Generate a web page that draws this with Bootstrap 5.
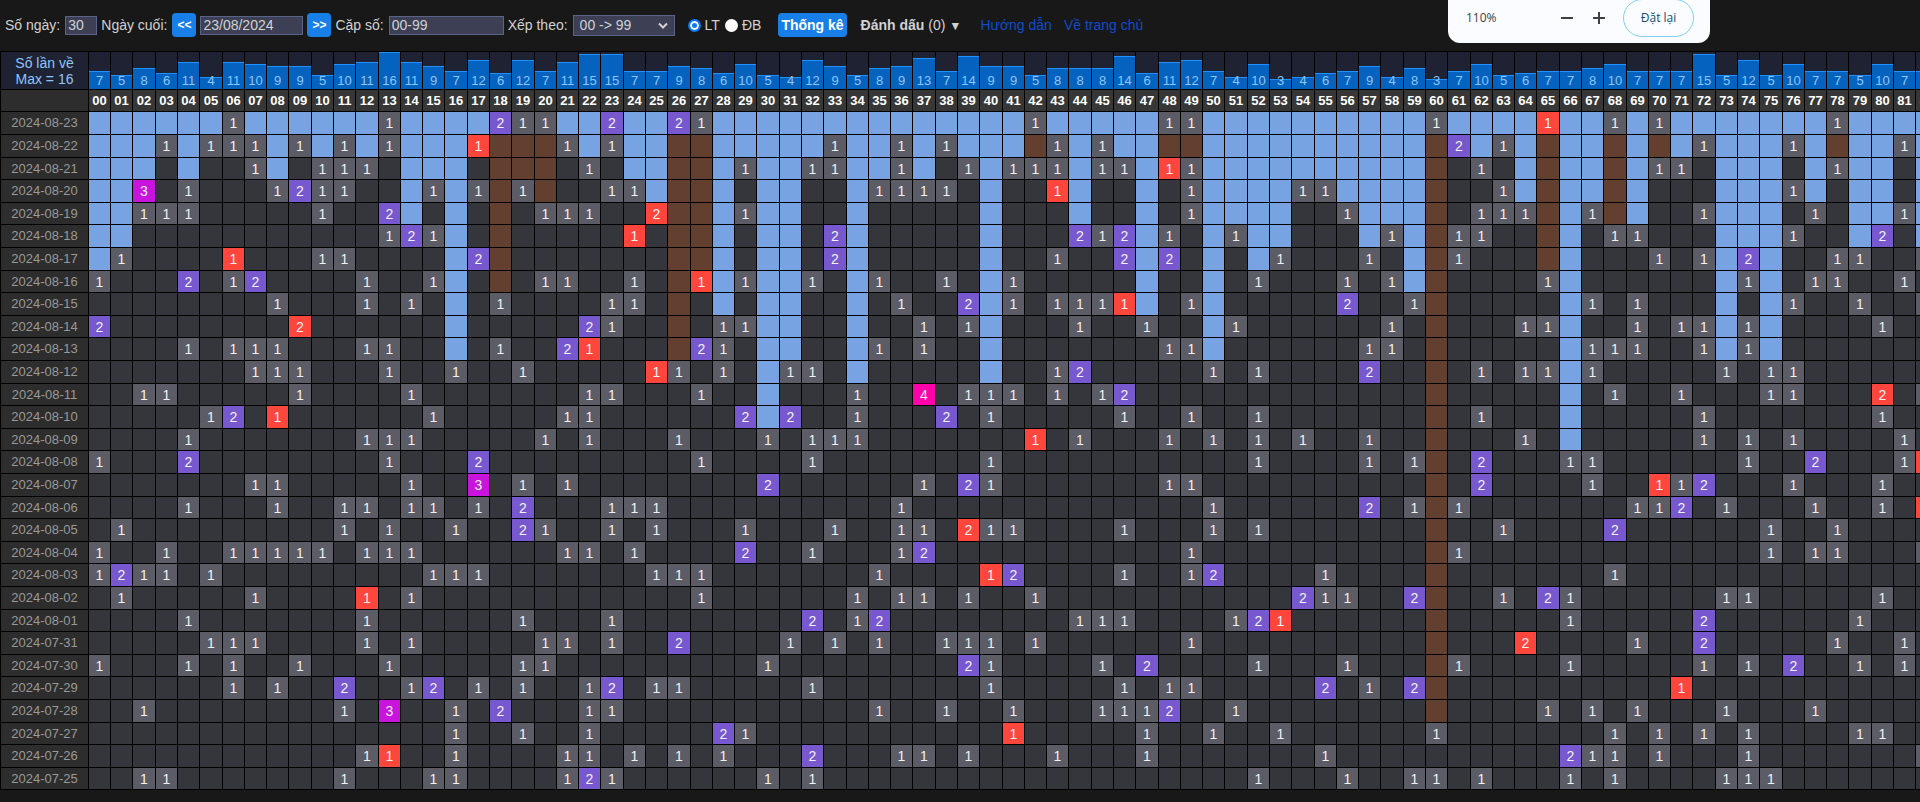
<!DOCTYPE html>
<html lang="vi" data-bs-theme="dark">
<head>
<meta charset="utf-8">
<meta name="viewport" content="width=device-width, initial-scale=1">
<title>Thống kê lô tô</title>
<link rel="stylesheet" href="https://cdn.jsdelivr.net/npm/bootstrap@5.3.0/dist/css/bootstrap.min.css">
<style>
  body { background: #181818; color: #d2d2d2; font-family: "Liberation Sans", Arial, sans-serif; font-size: 14px; line-height: 16px; }
  .toolbar { min-height: 51px; padding: 0 5px 1px; gap: 4px; white-space: nowrap; }
  .toolbar label { margin-right: 1px; }
  .toolbar .field { background: #3d3f54; border: 1px solid #5a6488; border-radius: 0; color: #d2d2d2; font-size: 14px; line-height: 16px; height: 19px; padding: 0 2px; }
  .toolbar .field-days { width: 32px; }
  .toolbar .field-date { width: 103px; }
  .toolbar .field-pairs { width: 115px; }
  .toolbar .field-sort { width: 102px; height: 21px; padding: 0 6px; appearance: none; }
  .sort-box { position: relative; }
  .sort-box svg { position: absolute; right: 7px; top: 7px; pointer-events: none; }
  .kinds { margin: 0 12px 0 9px; }
  .toolbar .act { background: #187fe9; border: 0; border-radius: 4px; color: #fff; font-size: 14px; font-weight: 700; line-height: 16px; height: 24px; padding: 0 3px; }
  .toolbar .act-step { width: 24px; padding: 0; font-size: 12px; }
  .toolbar .pick { appearance: none; width: 13px; height: 13px; border-radius: 50%; background: #fff; margin: 0; }
  .toolbar .pick:checked { border: 2px solid #0a78f5; box-shadow: inset 0 0 0 2px #fff; background: #0a78f5; }
  .toolbar .mark-menu { background: none; border: 0; color: #d2d2d2; padding: 0; margin: 0 15px 0 10px; line-height: 16px; }
  .toolbar a { color: #0f4bcc; text-decoration: none; }

  .zoom-bubble { position: absolute; top: 0; right: 210px; width: 262px; height: 43px; padding: 0 16px 8px 18px; background: #fbfcff; color: #3c4043; border-radius: 0 0 12px 12px; font: 12px/16px "Open Sans", sans-serif; z-index: 2; }
  .zoom-bubble button { background: none; border: 0; padding: 0; color: #3c4043; }
  .zoom-bubble .reset { width: 71px; height: 38px; border: 1px solid #7fd0f7; border-radius: 19px; color: #0a5273; font-weight: 500; }

  .grid-stat { table-layout: fixed; width: 1px; border-collapse: separate; border-spacing: 0; border: 0 solid #000; border-width: 1px 0 0 1px; font-size: 13px; color: #f2f2f2; cursor: default; }
  .grid-stat col { width: 22px; }
  .grid-stat col:nth-child(7n+4), .grid-stat col:nth-child(7n) { width: 23px; }
  .grid-stat col.dates { width: 88px; }
  .grid-stat th, .grid-stat td { padding: 0; border: 0 solid #000; border-width: 0 1px 1px 0; white-space: nowrap; font-weight: 400; }
  .grid-stat td { background: #35363b; font-size: 14px; }
  .grid-stat tbody tr { height: 23px; }
  .grid-stat tbody tr:nth-child(5n+3), .grid-stat tbody tr:nth-child(5n) { height: 22px; }
  .grid-stat tbody th { background: #2d2d2d; color: #999; }
  .grid-stat .totals { height: 38px; }
  .grid-stat .totals th { background: #1e2232; color: #8ec5fb; vertical-align: bottom; }
  .grid-stat .totals th:first-child { font-size: 14px; vertical-align: middle; }
  .grid-stat .totals .bar { background: #0563bf; border-top: 1px solid #1e90ff; display: flex; align-items: end; justify-content: center; }
  .grid-stat .pairs { height: 22px; }
  .grid-stat .pairs th { background: #373737; color: #fff; font-weight: 700; }
  .grid-stat .pairs th:first-child { background: #2d2d2d; }
  .grid-stat td.wait { background: #78a3e3; }
  .grid-stat td.rest { background: #623f2f; }
  .grid-stat td.hit1 { background: #5c5c66; }
  .grid-stat td.hit2 { background: #7758cf; }
  .grid-stat td.hit3 { background: #c814dc; }
  .grid-stat td.hit4 { background: #ff00aa; }
  .grid-stat td.special { background: #ff463c; }
</style>
</head>
<body>
<div class="position-relative overflow-hidden">
  <form class="toolbar d-flex align-items-center mb-0" onsubmit="return false">
    <label for="days">Số ngày:</label>
    <input class="field field-days" id="days" type="text" value="30">
    <label for="lastDay">Ngày cuối:</label>
    <button class="act act-step" type="button">&lt;&lt;</button>
    <input class="field field-date" id="lastDay" type="text" value="23/08/2024">
    <button class="act act-step" type="button">&gt;&gt;</button>
    <label for="pairs">Cặp số:</label>
    <input class="field field-pairs" id="pairs" type="text" value="00-99">
    <label for="sort">Xếp theo:</label>
    <div class="sort-box d-flex">
      <select class="field field-sort" id="sort"><option>00 -&gt; 99</option></select>
      <svg width="10" height="8" viewBox="0 0 10 8" fill="none" stroke="#d2d2d2" stroke-width="2"><path d="M1 1.5 5 5.5 9 1.5"/></svg>
    </div>
    <div class="kinds d-flex align-items-center gap-1">
      <input class="pick" type="radio" name="kind" id="lt" checked><label for="lt">LT</label>
      <input class="pick" type="radio" name="kind" id="db"><label for="db">ĐB</label>
    </div>
    <button class="act" type="submit">Thống kê</button>
    <button class="mark-menu" type="button"><b>Đánh dấu</b> (0) <small>▼</small></button>
    <a class="me-2" href="#help">Hướng dẫn</a>
    <a href="#home">Về trang chủ</a>
  </form>

  <div class="zoom-bubble d-flex align-items-center">
    <span class="me-auto">110%</span>
    <button class="d-flex me-3" type="button" aria-label="Thu nhỏ"><svg width="16" height="16" viewBox="0 0 16 16" stroke="#3c4043" stroke-width="2"><path d="M2 8h12"/></svg></button>
    <button class="d-flex me-3" type="button" aria-label="Phóng to"><svg width="16" height="16" viewBox="0 0 16 16" stroke="#3c4043" stroke-width="2"><path d="M2 8h12M8 2v12"/></svg></button>
    <button class="reset" type="button">Đặt lại</button>
  </div>

  <table class="grid-stat text-center align-middle" id="stat"></table>
</div>

<script src="https://cdn.jsdelivr.net/npm/bootstrap@5.3.0/dist/js/bootstrap.bundle.min.js"></script>
<script>
  // One line per day: pair, "xN" when it came up N times, "!" when it was the special prize.
  const draws = `
2024-08-23 6 13 18x2 19 20 23x2 26x2 27 42 48 49 60 65! 68 70 78
2024-08-22 3 5 6 7 9 11 13 17! 21 23 33 36 38 43 45 61x2 63 72 76 81
2024-08-21 7 10 11 12 22 29 32 33 36 39 41 42 43 45 46 48! 49 62 70 71 78
2024-08-20 2x3 4 8 9x2 10 11 15 17 19 23 24 35 36 37 38 43! 49 54 55 63 76
2024-08-19 2 3 4 10 13x2 20 21 22 25x2! 29 49 56 62 63 64 67 72 77 81
2024-08-18 13 14x2 15 24! 33x2 44x2 45 46x2 48 51 58 61 62 68 69 76 80x2
2024-08-17 1 6! 10 11 17x2 33x2 43 46x2 48x2 53 57 61 70 72 74x2 78 79 82
2024-08-16 0 4x2 6 7x2 12 15 20 21 24 27! 29 32 35 38 41 52 56 58 65 74 77 78 81
2024-08-15 8 12 14 18 23 24 36 39x2 41 43 44 45 46! 49 56x2 59 67 69 76 79 82
2024-08-14 0x2 9x2! 22x2 23 28 29 37 39 44 47 51 58 64 65 69 71 72 74 80
2024-08-13 4 6 7 8 12 13 18 21x2 22! 27x2 28 35 37 48 49 57 58 67 68 69 72 74
2024-08-12 7 8 9 13 16 19 25! 26 28 31 32 43 44x2 50 52 57x2 62 64 65 67 73 75 76
2024-08-11 2 3 9 14 22 23 27 34 37x4 39 40 41 43 45 46x2 68 71 75 76 80x2! 82
2024-08-10 5 6x2 8! 15 21 22 29x2 31x2 34 38x2 40 46 49 52 62 72 80
2024-08-09 4 12 13 14 20 22 26 30 32 33 34 42! 44 48 50 52 54 57 64 72 74 76 81
2024-08-08 0 4x2 13 17x2 27 32 40 52 57 59 62x2 66 67 74 77x2 81 82!
2024-08-07 7 8 14 17x3 19 21 30x2 37 39x2 40 48 49 62x2 67 70! 71 72x2 76 80
2024-08-06 4 8 11 12 14 15 17 19x2 23 24 25 36 50 57x2 59 61 69 70 71x2 73 77 80 82!
2024-08-05 1 11 13 16 19x2 20 23 25 29 33 36 37 39x2! 40 41 46 50 52 63 68x2 75 78
2024-08-04 0 3 6 7 8 9 10 12 13 14 21 22 24 29x2 32 36 37x2 49 61 75 77 78 82
2024-08-03 0 1x2 2 3 5 15 16 17 25 26 27 35 40! 41x2 46 49 50x2 55 68
2024-08-02 1 7 12! 14 27 34 36 37 39 42 54x2 55 56 59x2 63 65x2 66 73 74 80
2024-08-01 4 12 19 23 32x2 34 35x2 44 45 46 51 52x2 53! 66 72x2 79
2024-07-31 5 6 7 12 14 20 21 23 26x2 31 33 35 38 39 40 42 49 64x2! 69 72x2 78 81
2024-07-30 0 4 6 9 13 19 20 30 39x2 40 45 47x2 52 56 61 66 72 74 76x2 79 81
2024-07-29 6 8 11x2 14 15x2 17 19 22 23x2 25 26 32 40 46 48 49 55x2 57 59x2 71!
2024-07-28 2 11 13x3 16 18x2 22 23 35 38 41 45 46 47 48x2 51 65 67 69 73 77
2024-07-27 16 19 22 28x2 29 41! 47 50 53 60 68 70 72 74 79 80
2024-07-26 12 13! 16 21 22 24 26 28 32x2 36 37 39 43 47 55 66x2 67 68 70 74 82
2024-07-25 2 3 11 15 16 21 22x2 23 30 32 52 56 59 60 62 66 68 73 74 75`
    .trim().split('\n').map(line => {
      const [date, ...tokens] = line.split(' ');
      const hits = {};
      for (const t of tokens) {
        const [, pair, n, special] = t.match(/^(\d+)(?:x(\d))?(!?)$/);
        hits[pair] = { n: +(n || 1), special: !!special };
      }
      return { date, hits };
    });

  const pairs = Array.from({ length: 83 }, (_, i) => i);
  const totals = pairs.map(p => draws.reduce((s, d) => s + (d.hits[p] ? d.hits[p].n : 0), 0));
  const max = Math.max(...totals);

  // "wait": days since the pair last came up; "rest": gap before a hit on the newest day.
  const gapEnd = pairs.map(p => draws.findIndex((d, i) => d.hits[p] && i > 0));
  const cell = (d, i, p) => {
    const h = d.hits[p];
    if (h) return `<td class="${h.special ? 'special' : 'hit' + h.n}">${h.n}</td>`;
    if (i < gapEnd[p]) return `<td class="${draws[0].hits[p] ? 'rest' : 'wait'}"></td>`;
    return '<td></td>';
  };

  document.getElementById('stat').innerHTML =
    `<colgroup><col class="dates">${pairs.map(() => '<col>').join('')}</colgroup>
     <thead>
       <tr class="totals"><th>Số lần về<br>Max = ${max}</th>${totals.map(n =>
         `<th><div class="bar" style="height:${Math.round(4 + 33 * n / max)}px">${n}</div></th>`).join('')}</tr>
       <tr class="pairs"><th></th>${pairs.map(p => `<th scope="col">${String(p).padStart(2, '0')}</th>`).join('')}</tr>
     </thead>
     <tbody>${draws.map((d, i) =>
       `<tr><th scope="row">${d.date}</th>${pairs.map(p => cell(d, i, p)).join('')}</tr>`).join('')}</tbody>`;
</script>
</body>
</html>
